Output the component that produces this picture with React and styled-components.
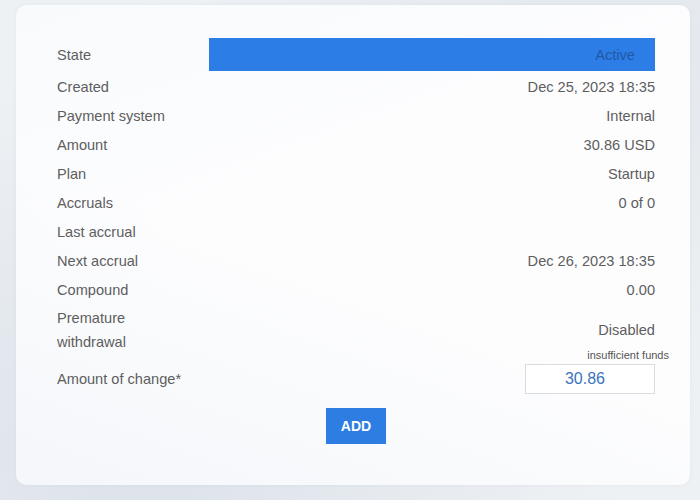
import React from 'react';
import styled, { createGlobalStyle } from 'styled-components';

const GlobalStyle = createGlobalStyle`
  html, body {
    margin: 0;
    padding: 0;
    width: 700px;
    height: 500px;
    overflow: hidden;
    background: #eef1f4;
    font-family: "Liberation Sans", Arial, sans-serif;
  }
`;

const Page = styled.div`
  width: 700px;
  height: 500px;
  box-sizing: border-box;
  padding: 5px 10px 15px 16px;
  background:
    radial-gradient(ellipse at 20% 90%, rgba(205, 214, 226, 0.55), transparent 60%),
    radial-gradient(ellipse at 90% 10%, rgba(220, 226, 234, 0.6), transparent 55%),
    #eef1f4;
`;

const Card = styled.div`
  height: 100%;
  box-sizing: border-box;
  padding: 33px 35px 0 41px;
  border-radius: 10px;
  background:
    linear-gradient(160deg, rgba(246, 249, 252, 0.7), rgba(255, 255, 255, 0) 40%),
    linear-gradient(20deg, rgba(243, 246, 250, 0.9), rgba(255, 255, 255, 0) 45%),
    #fdfdfe;
  box-shadow: 0 0 3px rgba(180, 190, 200, 0.25);
`;

const Table = styled.div`
  display: grid;
  grid-template-columns: 152px 1fr;
  font-size: 14.6px;
  color: #5e5e5e;
`;

const Label = styled.div`
  display: flex;
  align-items: center;
  height: ${(p) => p.h || 29}px;
  line-height: 24px;
`;

const Value = styled.div`
  display: flex;
  align-items: center;
  justify-content: flex-end;
  height: ${(p) => p.h || 29}px;
`;

const StateBar = styled(Value)`
  height: 33px;
  background: #2d7de6;
  color: #2159a8;
  padding-right: 20px;
  margin-bottom: 1px;
`;

const StateLabel = styled(Label)`
  height: 33px;
`;

const Note = styled.div`
  grid-column: 2;
  text-align: right;
  font-size: 11px;
  color: #555;
  margin: -6px -14px 0 0;
  height: 14px;
  line-height: 10px;
`;

const Input = styled.input`
  width: 130px;
  height: 30px;
  box-sizing: border-box;
  border: 1px solid #d9dde2;
  background: #fff;
  text-align: center;
  font-family: "Liberation Sans", Arial, sans-serif;
  font-size: 16px;
  color: #3a74bd;
  outline: none;
  padding: 0 10px 0 0;
`;

const Actions = styled.div`
  display: flex;
  justify-content: center;
  margin-top: 14px;
`;

const Button = styled.button`
  width: 60px;
  height: 36px;
  border: none;
  background: #2d7de3;
  color: #fff;
  font-family: "Liberation Sans", Arial, sans-serif;
  font-weight: bold;
  font-size: 14px;
  cursor: pointer;
`;

const rows = [
  ['Created', 'Dec 25, 2023 18:35'],
  ['Payment system', 'Internal'],
  ['Amount', '30.86 USD'],
  ['Plan', 'Startup'],
  ['Accruals', '0 of 0'],
  ['Last accrual', ''],
  ['Next accrual', 'Dec 26, 2023 18:35'],
  ['Compound', '0.00'],
];

export default function App() {
  return (
    <>
      <GlobalStyle />
      <Page>
        <Card>
          <Table>
            <StateLabel>State</StateLabel>
            <StateBar>Active</StateBar>
            {rows.map(([label, value]) => (
              <React.Fragment key={label}>
                <Label>{label}</Label>
                <Value>{value}</Value>
              </React.Fragment>
            ))}
            <Label h={52}>Premature<br />withdrawal</Label>
            <Value h={52}>Disabled</Value>
            <Note>insufficient funds</Note>
            <Label h={30}>Amount of change*</Label>
            <Value h={30}>
              <Input defaultValue="30.86" />
            </Value>
          </Table>
          <Actions>
            <Button>ADD</Button>
          </Actions>
        </Card>
      </Page>
    </>
  );
}
